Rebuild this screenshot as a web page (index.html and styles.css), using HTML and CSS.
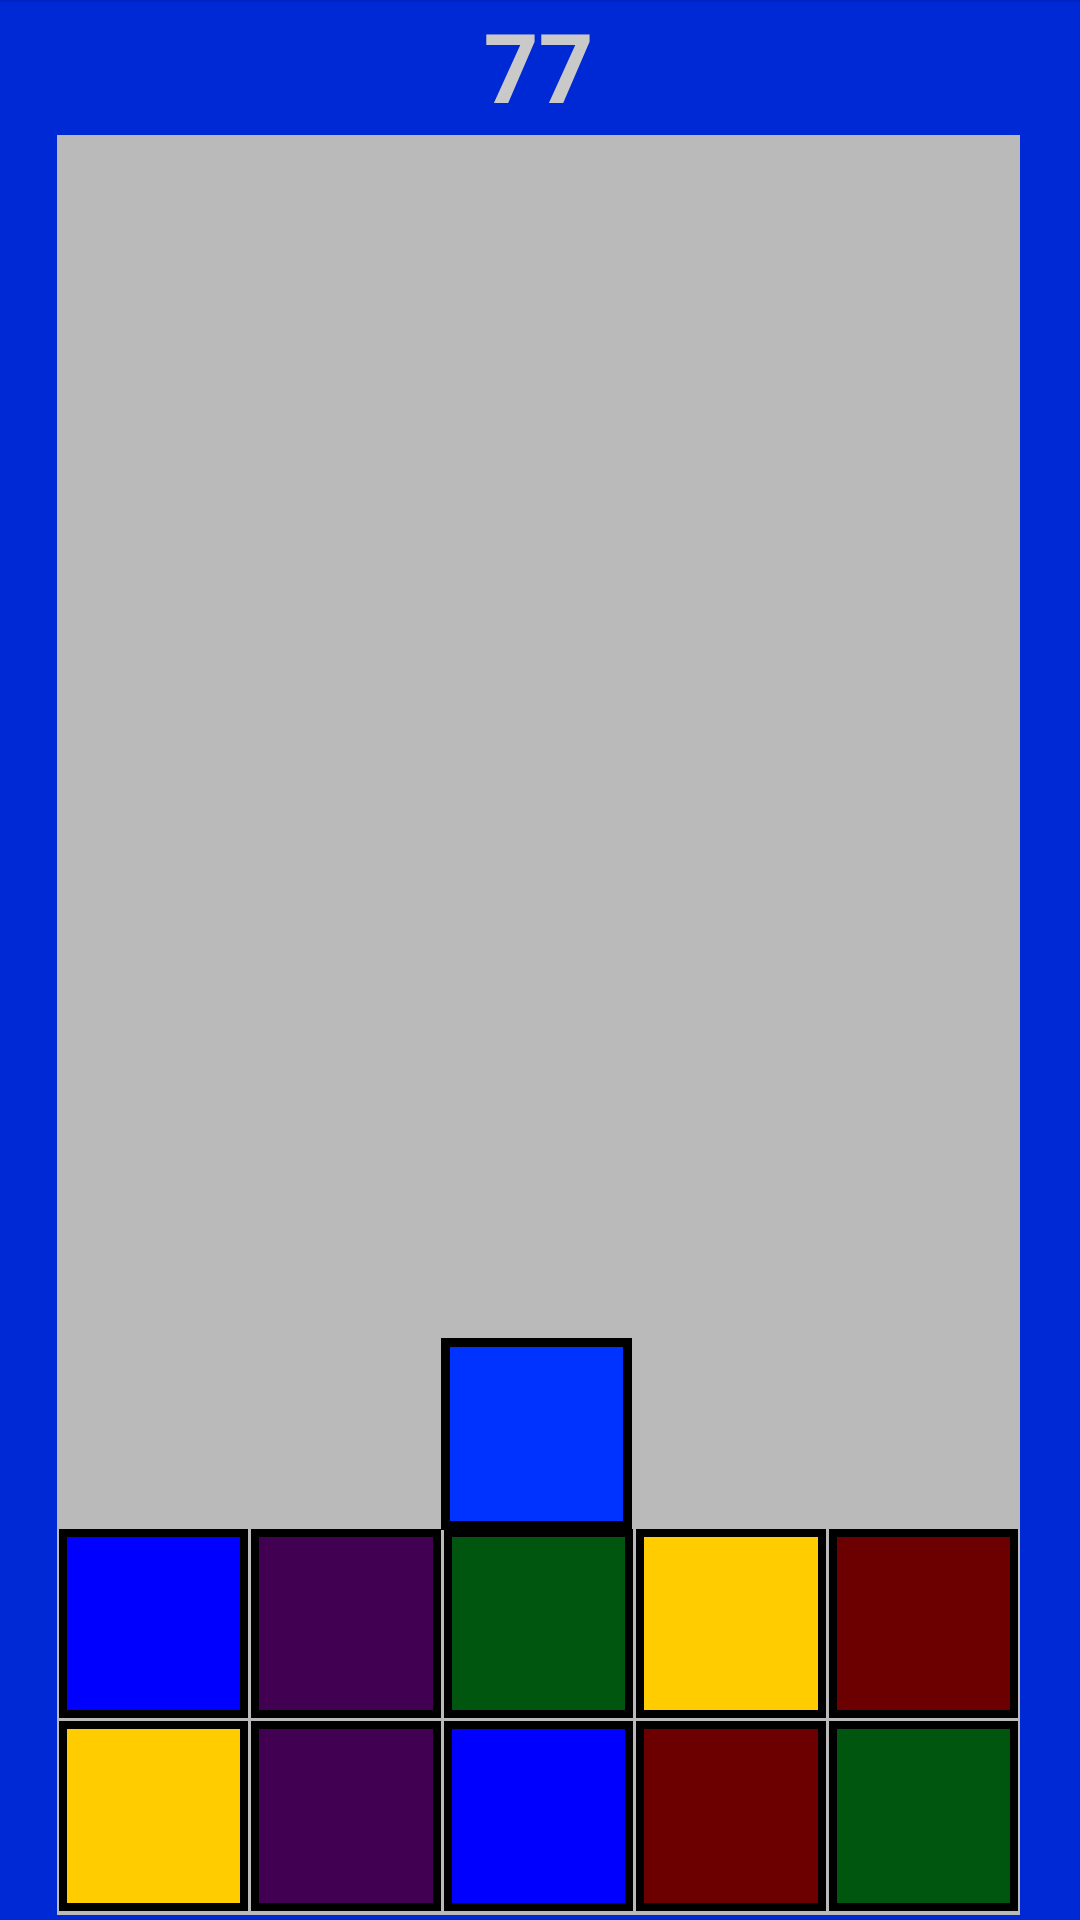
FILE: index.html
```html
<!DOCTYPE html>
<html>
<head>
<meta charset="utf-8">
<link rel="stylesheet" href="styles.css">
</head>
<body>
<div class="screen">
  <header class="score-bar"><span class="score">77</span></header>
  <div class="board">
    <div class="piece falling"></div>
    <div class="stack">
      <div class="cell c-blue"></div>
      <div class="cell c-purple"></div>
      <div class="cell c-green"></div>
      <div class="cell c-yellow"></div>
      <div class="cell c-red"></div>
      <div class="cell c-yellow"></div>
      <div class="cell c-purple"></div>
      <div class="cell c-blue"></div>
      <div class="cell c-red"></div>
      <div class="cell c-green"></div>
    </div>
  </div>
</div>
</body>
</html>
```

FILE: styles.css
```css
html, body {
  margin: 0;
  padding: 0;
  background: #0029d6;
}
.screen {
  width: 1080px;
  height: 1920px;
  display: flex;
  flex-direction: column;
  border-top: 2px solid #0022c2;
  box-sizing: border-box;
  overflow: hidden;
}
.score-bar {
  height: 133px;
  display: flex;
  justify-content: center;
  align-items: flex-start;
}
.score {
  font-family: Roboto, "Liberation Sans", sans-serif;
  font-weight: bold;
  font-size: 96px;
  line-height: 1;
  color: #c9c9c9;
  margin-top: 20px;
  margin-right: 3px;
}
.board {
  position: relative;
  margin-left: 57px;
  width: 963px;
  height: 1780px;
  background: #bababa;
  display: flex;
  flex-direction: column;
  justify-content: flex-end;
  padding-bottom: 2.5px;
  box-sizing: border-box;
}
.stack {
  display: grid;
  grid-template-columns: repeat(5, 192.6px);
  grid-auto-rows: 192.6px;
}
.cell {
  margin: 1.5px;
  border: 8.5px solid #000;
}
.piece {
  position: absolute;
  width: 191px;
  height: 192px;
  box-sizing: border-box;
  border: 9.5px solid #000;
}
.falling {
  left: 384px;
  top: 1203px;
  background: #0033ff;
}
.c-blue { background: #0000ff; }
.c-purple { background: #420052; }
.c-green { background: #00550f; }
.c-yellow { background: #ffcc00; }
.c-red { background: #6c0000; }
```
